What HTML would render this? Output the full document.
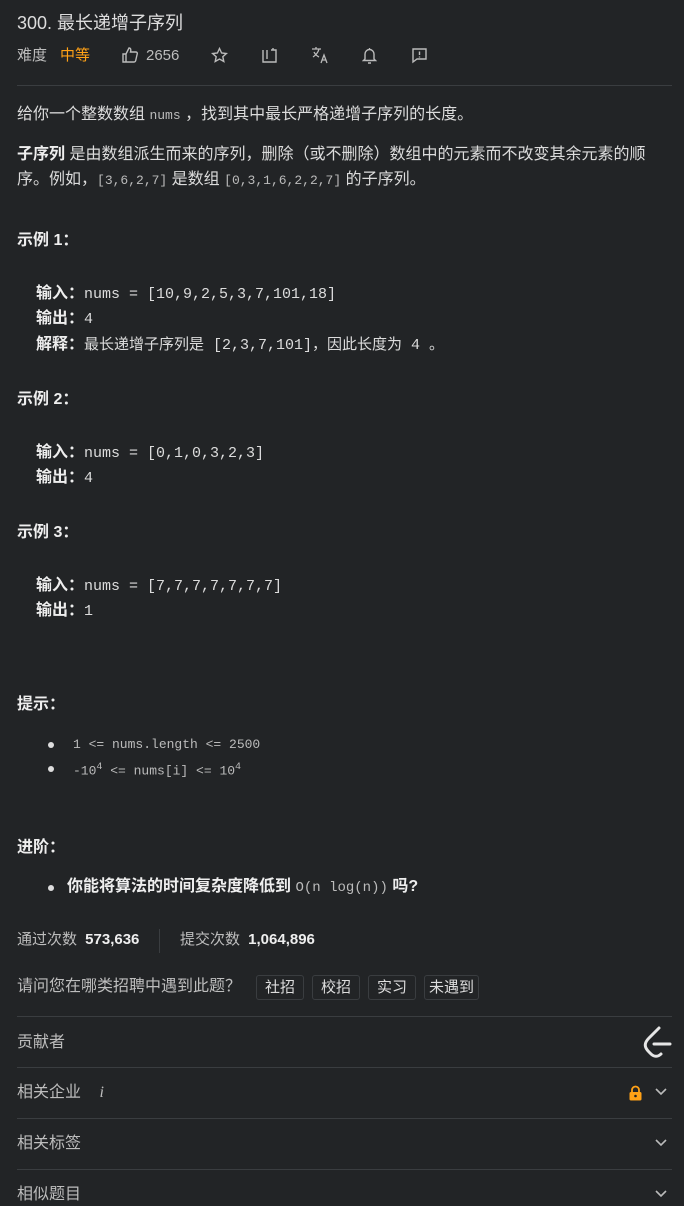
<!DOCTYPE html>
<html><head><meta charset="utf-8"><style>
html,body{margin:0;padding:0;background:#222426;}
body{width:684px;height:1206px;position:relative;overflow:hidden;font-family:"Liberation Sans","Noto Sans CJK SC",sans-serif;color:#dcdcdc;font-size:16px;}
.a{position:absolute;white-space:nowrap;line-height:20px;}
.m{font-family:"Liberation Mono","Noto Sans CJK SC",monospace;font-size:15px}
.m b{font-size:16px;font-family:"Liberation Sans","Noto Sans CJK SC",sans-serif}
.c{font-family:"Liberation Mono","Noto Sans CJK SC",monospace;color:#bbb;font-size:13px;}
b{font-weight:bold;color:#eee}
.hr{position:absolute;left:17px;right:12px;height:1px;background:#3a3d40;}
.g{color:#bdbdbd}
.tag{display:inline-block;border:1px solid #3a3d40;border-radius:3px;padding:0 8px;height:23px;line-height:23px;margin-left:8px;color:#ddd;font-size:15px}
svg{position:absolute}
.dot{position:absolute;width:6px;height:6px;border-radius:3px;background:#ddd}
</style></head><body>
<div class="a" style="left:17px;top:12px;font-size:18px;color:#ddd;line-height:22px">300. 最长递增子序列</div>
<div class="a g" style="left:17px;top:46px;font-size:15px">难度</div>
<div class="a" style="left:60px;top:46px;font-size:15px;color:#ffa116">中等</div>
<svg style="left:121px;top:46px" width="18" height="18" viewBox="0 0 18 18" fill="none" stroke="#bbb" stroke-width="1.4"><path d="M2 8h3v8H2zM5 8l3-6c2 0 2 2 1.5 4H15c1 0 1.5 1 1.2 2l-1.5 6.5c-.2.8-.8 1.5-1.7 1.5H5"/></svg>
<div class="a g" style="left:146px;top:46px;font-size:15px">2656</div>
<svg style="left:211px;top:47px" width="17" height="17" viewBox="0 0 17 17" fill="none" stroke="#bbb" stroke-width="1.4"><path d="M8.5 1.5l2.1 4.5 4.8.5-3.6 3.2 1 4.8-4.3-2.5-4.3 2.5 1-4.8L1.6 6.5l4.8-.5z"/></svg>
<svg style="left:261px;top:47px" width="17" height="17" viewBox="0 0 17 17" fill="none" stroke="#bbb" stroke-width="1.4"><path d="M2 3v12h13V6M6 3v9M10 3h5v3M12 1v2"/></svg>
<svg style="left:311px;top:46px" width="18" height="18" viewBox="0 0 18 18" fill="none" stroke="#bbb" stroke-width="1.3"><path d="M1 3h9M5 1v2M8 3c-1 4-3 6-6 8M3 6c1 2 3 4 5 5M10 17l3-8 3 8M11 14h4"/></svg>
<svg style="left:362px;top:47px" width="15" height="17" viewBox="0 0 15 17" fill="none" stroke="#bbb" stroke-width="1.4"><path d="M3 12V7a4.5 4.5 0 019 0v5l1.5 1.5h-12zM6 16h3M7.5 1v1.5"/></svg>
<svg style="left:411px;top:47px" width="17" height="17" viewBox="0 0 17 17" fill="none" stroke="#bbb" stroke-width="1.4"><path d="M2 2h13v10H6l-4 3zM8.5 4.5v3.5M8.5 9.5v1"/></svg>
<div class="hr" style="top:85px"></div>
<div class="a" style="left:17px;top:105px">给你一个整数数组 <span class="c">nums</span> ，找到其中最长严格递增子序列的长度。</div>
<div class="a" style="left:17px;top:145px"><b>子序列</b> 是由数组派生而来的序列，删除（或不删除）数组中的元素而不改变其余元素的顺</div>
<div class="a" style="left:17px;top:170px">序。例如，<span class="c">[3,6,2,7]</span> 是数组 <span class="c">[0,3,1,6,2,2,7]</span> 的子序列。</div>
<div class="a" style="left:17px;top:231px"><b>示例 1：</b></div>
<div class="a m" style="left:36px;top:284px"><b>输入：</b>nums = [10,9,2,5,3,7,101,18]</div>
<div class="a m" style="left:36px;top:309px"><b>输出：</b>4</div>
<div class="a m" style="left:36px;top:335px"><b>解释：</b>最长递增子序列是 [2,3,7,101]，因此长度为 4 。</div>
<div class="a" style="left:17px;top:390px"><b>示例 2：</b></div>
<div class="a m" style="left:36px;top:443px"><b>输入：</b>nums = [0,1,0,3,2,3]</div>
<div class="a m" style="left:36px;top:468px"><b>输出：</b>4</div>
<div class="a" style="left:17px;top:523px"><b>示例 3：</b></div>
<div class="a m" style="left:36px;top:576px"><b>输入：</b>nums = [7,7,7,7,7,7,7]</div>
<div class="a m" style="left:36px;top:601px"><b>输出：</b>1</div>
<div class="a" style="left:17px;top:695px"><b>提示：</b></div>
<div class="dot" style="left:48px;top:742px"></div>
<div class="a c" style="left:73px;top:735px">1 &lt;= nums.length &lt;= 2500</div>
<div class="dot" style="left:48px;top:766px"></div>
<div class="a c" style="left:73px;top:758px">-10<sup style="font-size:10px">4</sup> &lt;= nums[i] &lt;= 10<sup style="font-size:10px">4</sup></div>
<div class="a" style="left:17px;top:838px"><b>进阶：</b></div>
<div class="dot" style="left:48px;top:885px"></div>
<div class="a" style="left:67px;top:877px"><b>你能将算法的时间复杂度降低到</b> <span class="c" style="font-size:14px">O(n log(n))</span> <b>吗?</b></div>
<div class="a g" style="left:17px;top:930px;font-size:15px">通过次数 <b style="margin-left:4px">573,636</b></div>
<div style="position:absolute;left:159px;top:929px;width:1px;height:24px;background:#3a3d40"></div>
<div class="a g" style="left:180px;top:930px;font-size:15px">提交次数 <b style="margin-left:4px">1,064,896</b></div>
<div class="a g" style="left:17px;top:977px">请问您在哪类招聘中遇到此题？</div>
<div class="a" style="left:248px;top:975px"><span class="tag">社招</span><span class="tag">校招</span><span class="tag">实习</span><span class="tag" style="padding:0 4px">未遇到</span></div>
<div class="hr" style="top:1016px"></div>
<div class="a g" style="left:17px;top:1033px">贡献者</div>
<svg style="left:641px;top:1025px" width="32" height="36" viewBox="0 0 32 36" fill="none" stroke="#e6e6e6" stroke-width="3" stroke-linecap="round"><path d="M18 3L8 13C3 18 3 22 8 27L10 29C13 32 17 32 20 29M13 19H29"/></svg>
<div class="hr" style="top:1067px"></div>
<div class="a g" style="left:17px;top:1083px">相关企业 <i style="margin-left:14px;font-family:'Liberation Serif',serif">i</i></div>
<svg style="left:628px;top:1085px" width="15" height="16" viewBox="0 0 15 16"><path d="M4 7V5a3.5 3.5 0 017 0v2" fill="none" stroke="#ffa116" stroke-width="1.8"/><rect x="1.5" y="7" width="12" height="8.5" rx="1.5" fill="#ffa116"/><circle cx="7.5" cy="11" r="1.3" fill="#222"/></svg>
<svg style="left:654px;top:1087px" width="14" height="10" viewBox="0 0 14 10" fill="none" stroke="#bbb" stroke-width="1.6"><path d="M2 2l5 5 5-5"/></svg>
<div class="hr" style="top:1118px"></div>
<div class="a g" style="left:17px;top:1134px">相关标签</div>
<svg style="left:654px;top:1138px" width="14" height="10" viewBox="0 0 14 10" fill="none" stroke="#bbb" stroke-width="1.6"><path d="M2 2l5 5 5-5"/></svg>
<div class="hr" style="top:1169px"></div>
<div class="a g" style="left:17px;top:1185px">相似题目</div>
<svg style="left:654px;top:1189px" width="14" height="10" viewBox="0 0 14 10" fill="none" stroke="#bbb" stroke-width="1.6"><path d="M2 2l5 5 5-5"/></svg>
</body></html>
